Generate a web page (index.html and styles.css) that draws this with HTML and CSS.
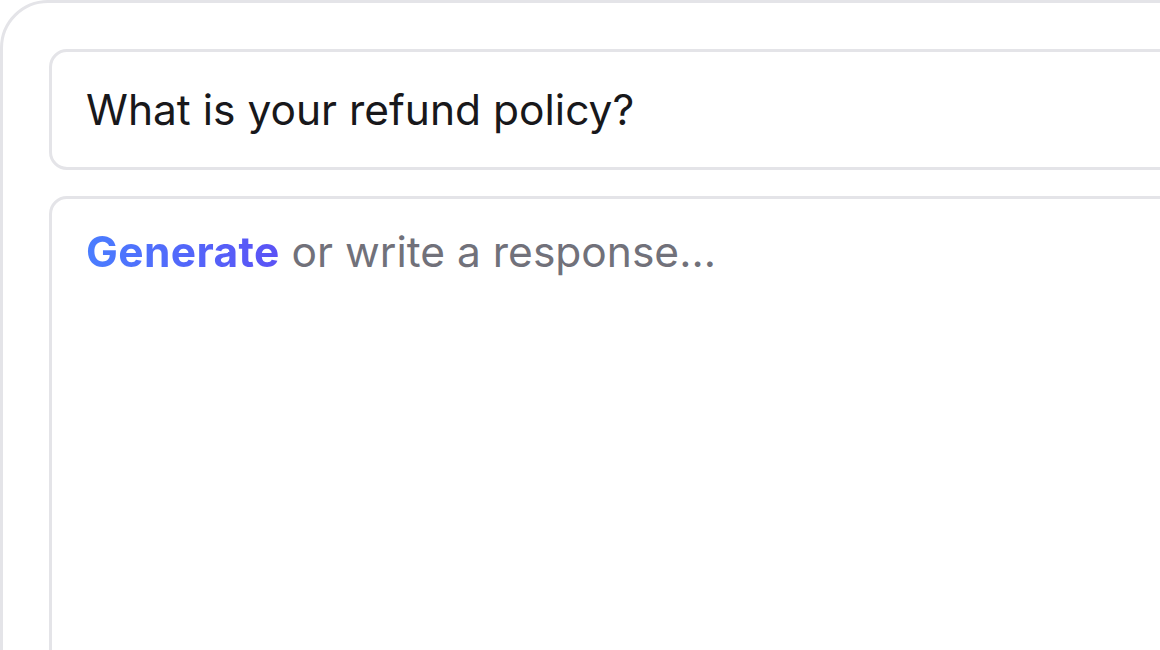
FILE: index.html
```html
<!DOCTYPE html>
<html>
<head>
<meta charset="utf-8">
<link rel="stylesheet" href="styles.css">
</head>
<body>
<div class="card">
  <div class="question">What is your refund policy?</div>
  <div class="response">
    <span class="generate">Generate</span> <span class="placeholder">or write a response...</span>
  </div>
</div>
</body>
</html>
```
FILE: styles.css
```css
html, body {
  margin: 0;
  padding: 0;
  background: #ffffff;
  overflow: hidden;
}
body {
  font-family: Inter, "Noto Sans", sans-serif;
  width: 1160px;
  height: 650px;
}
.card {
  width: 1300px;
  height: 800px;
  box-sizing: border-box;
  border: 3px solid #e4e4e8;
  border-radius: 48px 0 0 0;
  padding: 46px 0 0 46px;
  display: flex;
  flex-direction: column;
  gap: 26px;
  background: #fff;
}
.question {
  height: 121px;
  box-sizing: border-box;
  border: 3px solid #e4e4e8;
  border-radius: 18px;
  display: flex;
  align-items: center;
  padding-left: 34px;
  font-size: 42.5px;
  color: #18181b;
}
.response {
  flex: 1;
  box-sizing: border-box;
  border: 3px solid #e4e4e8;
  border-radius: 18px;
  padding: 27px 0 0 34px;
  font-size: 42.5px;
  line-height: 52px;
}
.generate {
  font-weight: 700;
  letter-spacing: 0.35px;
  background: linear-gradient(90deg, #4a7dff 0%, #5b52f5 100%);
  -webkit-background-clip: text;
  background-clip: text;
  color: transparent;
}
.placeholder {
  color: #71717a;
}
```
